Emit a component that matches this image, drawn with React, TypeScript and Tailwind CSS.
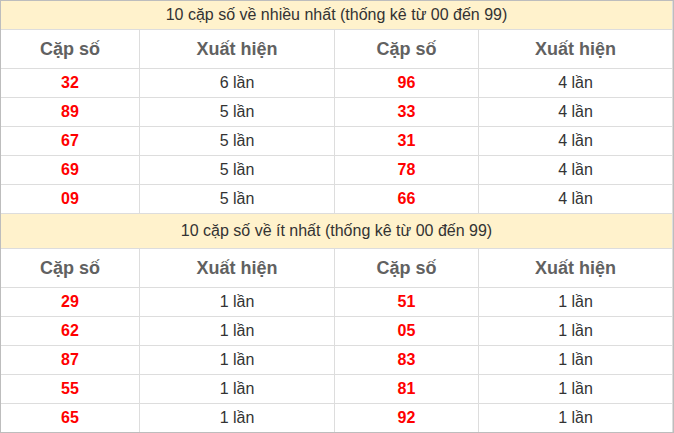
import React from "react";

type Pair = { so: string; lan: number };

const nhieuNhat: Pair[] = [
  { so: "32", lan: 6 },
  { so: "89", lan: 5 },
  { so: "67", lan: 5 },
  { so: "69", lan: 5 },
  { so: "09", lan: 5 },
  { so: "96", lan: 4 },
  { so: "33", lan: 4 },
  { so: "31", lan: 4 },
  { so: "78", lan: 4 },
  { so: "66", lan: 4 },
];

const itNhat: Pair[] = [
  { so: "29", lan: 1 },
  { so: "62", lan: 1 },
  { so: "87", lan: 1 },
  { so: "55", lan: 1 },
  { so: "65", lan: 1 },
  { so: "51", lan: 1 },
  { so: "05", lan: 1 },
  { so: "83", lan: 1 },
  { so: "81", lan: 1 },
  { so: "92", lan: 1 },
];

const grid = "grid grid-cols-[138px_195px_144px_194px]";
const cell = "flex items-center justify-center";

function StatTable({ title, data, titleH, last }: { title: string; data: Pair[]; titleH: string; last?: boolean }) {
  const left = data.slice(0, 5);
  const right = data.slice(5);
  return (
    <>
      <div className={`${titleH} flex items-center justify-center bg-[#fff2cc] text-[16px] text-[#333] border-b border-[#dddddd]`}>
        {title}
      </div>
      <div className={`${grid} h-[39px] border-b border-[#dddddd] text-[18px] font-bold text-[#616161]`}>
        <div className={cell}>Cặp số</div>
        <div className={`${cell} border-l border-[#dddddd]`}>Xuất hiện</div>
        <div className={`${cell} border-l border-[#dddddd]`}>Cặp số</div>
        <div className={`${cell} border-l border-[#dddddd]`}>Xuất hiện</div>
      </div>
      {left.map((p, i) => {
        const q = right[i];
        const noBorder = last && i === 4;
        return (
          <div
            key={p.so}
            className={`${grid} text-[16px] ${noBorder ? "h-[28px]" : "h-[29px] border-b border-[#dddddd]"}`}
          >
            <div className={`${cell} font-bold text-[#ff0000]`}>{p.so}</div>
            <div className={`${cell} border-l border-[#dddddd] text-[#333]`}>{p.lan} lần</div>
            <div className={`${cell} border-l border-[#dddddd] font-bold text-[#ff0000]`}>{q.so}</div>
            <div className={`${cell} border-l border-[#dddddd] text-[#333]`}>{q.lan} lần</div>
          </div>
        );
      })}
    </>
  );
}

export default function App() {
  return (
    <div className="w-[674px] h-[433px] bg-white border border-[#bdbdbd] font-['Liberation_Sans',Arial,sans-serif]">
      <div className="border-r border-[#dddddd]">
        <StatTable title="10 cặp số về nhiều nhất (thống kê từ 00 đến 99)" data={nhieuNhat} titleH="h-[29px]" />
        <StatTable title="10 cặp số về ít nhất (thống kê từ 00 đến 99)" data={itNhat} titleH="h-[35px]" last />
      </div>
    </div>
  );
}
